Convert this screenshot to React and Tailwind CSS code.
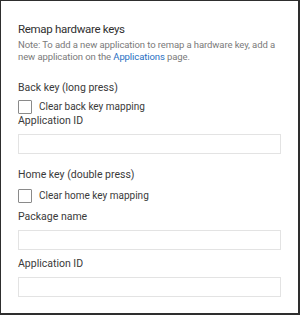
import React from 'react';

const Field = ({ label, className = '' }) => (
  <div className={className}>
    <div className="text-[10.5px] leading-[14px] text-[#3a3a3a]">{label}</div>
    <input
      type="text"
      className="mt-[6px] block w-[263px] h-[20px] border border-[#e3e3e3] bg-white outline-none"
    />
  </div>
);

const Check = ({ label, className = '' }) => (
  <label className={`flex items-center h-[14px] ${className}`}>
    <span className="w-[14px] h-[14px] border border-[#8a8a8a] rounded-[1px] bg-white" />
    <span className="ml-[7px] text-[10px] leading-[14px] text-[#3a3a3a]">{label}</span>
  </label>
);

export default function App() {
  return (
    <div
      className="w-[300px] h-[315px] bg-white border-l border-t border-r-2 border-b-2 border-[#2e2e2e] pl-[17px] pt-[20px]"
      style={{ fontFamily: 'Roboto, "Liberation Sans", sans-serif' }}
    >
      <h1 className="text-[11.5px] leading-[16px] tracking-[-0.3px] text-[#2f2f2f]">Remap hardware keys</h1>
      <p className="mt-[2px] w-[272px] text-[9.5px] leading-[12px] tracking-[-0.1px] text-[#7a7a7a]">
        Note: To add a new application to remap a hardware key, add a new application on the{' '}
        <span className="text-[#1f6fc2]">Applications</span> page.
      </p>

      {/* Back key */}
      <div className="mt-[18px] text-[10.5px] leading-[14px] text-[#3a3a3a]">Back key (long press)</div>
      <Check label="Clear back key mapping" className="mt-[5px]" />
      <Field label="Application ID" />

      {/* Home key */}
      <div className="mt-[14px] text-[10.5px] leading-[14px] text-[#3a3a3a]">Home key (double press)</div>
      <Check label="Clear home key mapping" className="mt-[7px]" />
      <Field label="Package name" className="mt-[7px]" />
      <Field label="Application ID" className="mt-[7px]" />
    </div>
  );
}
